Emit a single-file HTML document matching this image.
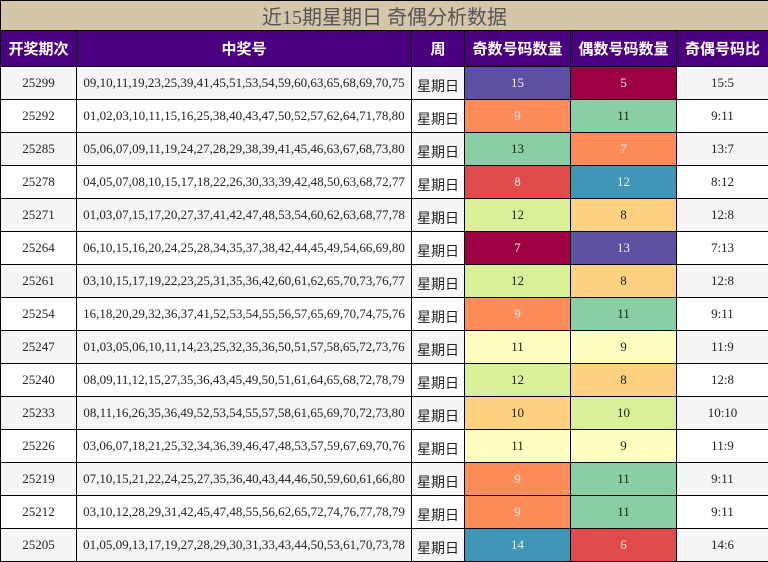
<!DOCTYPE html><html><head><meta charset="utf-8"><style>
body{margin:0;width:768px;height:562px;overflow:hidden;background:#fff}
table{border-collapse:collapse;width:768px;table-layout:fixed;font-family:"Liberation Serif","Noto Serif CJK SC",serif;font-size:13px;color:#222}
td,th{border:1px solid #000;text-align:center;padding:0}
.t{height:28px;background:#d5c6a9;color:#555;font-family:"Liberation Serif","Noto Sans CJK SC",sans-serif;font-size:20px;font-weight:normal}
th.h{height:35px;background:#4b0080;color:#fff;font-family:"Liberation Sans","Noto Sans CJK SC",sans-serif;font-size:15px;font-weight:bold}
tr.r td{height:32px}
tr.r:nth-child(odd) td{background:#f5f5f5}
td.w{font-family:"Liberation Sans","Noto Sans CJK SC",sans-serif;font-size:14px;padding-top:5px;height:27px!important}
</style></head><body><table>
<colgroup><col style="width:76px"><col style="width:335px"><col style="width:53px"><col style="width:106px"><col style="width:106px"><col style="width:92px"></colgroup>
<tr><th class="t" colspan="6">近15期星期日 奇偶分析数据</th></tr>
<tr><th class="h">开奖期次</th><th class="h">中奖号</th><th class="h">周</th><th class="h">奇数号码数量</th><th class="h">偶数号码数量</th><th class="h">奇偶号码比</th></tr>
<tbody id="b"></tbody></table>
<script>
var D=[["25299","09,10,11,19,23,25,39,41,45,51,53,54,59,60,63,65,68,69,70,75",15,5,"#5e4fa2","#9e0142"],
["25292","01,02,03,10,11,15,16,25,38,40,43,47,50,52,57,62,64,71,78,80",9,11,"#fc8d59","#88cfa4"],
["25285","05,06,07,09,11,19,24,27,28,29,38,39,41,45,46,63,67,68,73,80",13,7,"#88cfa4","#fc8d59"],
["25278","04,05,07,08,10,15,17,18,22,26,30,33,39,42,48,50,63,68,72,77",8,12,"#e04a4a","#3f96b7"],
["25271","01,03,07,15,17,20,27,37,41,42,47,48,53,54,60,62,63,68,77,78",12,8,"#d9ef98","#fed280"],
["25264","06,10,15,16,20,24,25,28,34,35,37,38,42,44,45,49,54,66,69,80",7,13,"#9e0142","#5e4fa2"],
["25261","03,10,15,17,19,22,23,25,31,35,36,42,60,61,62,65,70,73,76,77",12,8,"#d9ef98","#fed280"],
["25254","16,18,20,29,32,36,37,41,52,53,54,55,56,57,65,69,70,74,75,76",9,11,"#fc8d59","#88cfa4"],
["25247","01,03,05,06,10,11,14,23,25,32,35,36,50,51,57,58,65,72,73,76",11,9,"#ffffbf","#ffffbf"],
["25240","08,09,11,12,15,27,35,36,43,45,49,50,51,61,64,65,68,72,78,79",12,8,"#d9ef98","#fed280"],
["25233","08,11,16,26,35,36,49,52,53,54,55,57,58,61,65,69,70,72,73,80",10,10,"#fed280","#d9ef98"],
["25226","03,06,07,18,21,25,32,34,36,39,46,47,48,53,57,59,67,69,70,76",11,9,"#ffffbf","#ffffbf"],
["25219","07,10,15,21,22,24,25,27,35,36,40,43,44,46,50,59,60,61,66,80",9,11,"#fc8d59","#88cfa4"],
["25212","03,10,12,28,29,31,42,45,47,48,55,56,62,65,72,74,76,77,78,79",9,11,"#fc8d59","#88cfa4"],
["25205","01,05,09,13,17,19,27,28,29,30,31,33,43,44,50,53,61,70,73,78",14,6,"#3f96b7","#e04a4a"]];
var dark={"#5e4fa2":1,"#9e0142":1,"#fc8d59":1,"#e04a4a":1,"#3f96b7":1};
var h="";D.forEach(function(d){h+='<tr class="r"><td>'+d[0]+'</td><td>'+d[1]+'</td><td class="w">星期日</td><td style="background:'+d[4]+'!important;color:'+(dark[d[4]]?'#eee':'#222')+'">'+d[2]+'</td><td style="background:'+d[5]+'!important;color:'+(dark[d[5]]?'#eee':'#222')+'">'+d[3]+'</td><td>'+d[2]+':'+d[3]+'</td></tr>';});
document.getElementById("b").innerHTML=h;
</script></body></html>
